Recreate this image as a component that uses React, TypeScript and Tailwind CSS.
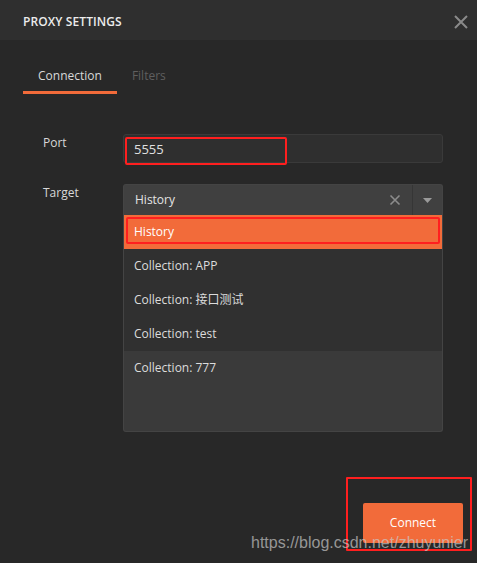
import React from 'react';

const OPTIONS = ['History', 'Collection: APP', 'Collection: 接口测试', 'Collection: test', 'Collection: 777'];

export default function App() {
  return (
    <div
      className="relative w-[477px] h-[563px] overflow-hidden bg-[#282828] text-[#dcdcdc]"
      style={{ fontFamily: '"Open Sans", "Noto Sans CJK SC", sans-serif' }}
    >
      {/* Header */}
      <div className="flex items-center justify-between h-10 pl-[23px] pr-[8px] pt-[3px] bg-[#2f2f2f]">
        <span className="text-[12px] font-semibold tracking-[0.1px] text-[#ececec]">PROXY SETTINGS</span>
        <svg width="16" height="16" viewBox="0 0 16 16">
          <path d="M2 2 L14 14 M14 2 L2 14" stroke="#8a8a8a" strokeWidth="2" />
        </svg>
      </div>

      {/* Tabs */}
      <div className="flex pl-[23px] mt-[28px]">
        <div className="px-[15px] pb-[7px] border-b-[3px] border-[#f26b3a] text-[12px] leading-4 text-[#d8d8d8]">
          Connection
        </div>
        <div className="px-[15px] pb-[7px] text-[12px] leading-4 text-[#5f5f5f]">Filters</div>
      </div>

      {/* Form */}
      <div className="flex flex-col mt-[40px] pl-[43px] pr-[34px]">
        <div className="flex">
          <div className="w-[80px] pt-[1px] text-[12px] leading-4 text-[#d8d8d8]">Port</div>
          <div className="flex-1 h-[29px] flex items-center pl-[10px] pt-[2px] rounded-[3px] border border-[#3a3a3a] bg-[#2f2f2f] text-[13px] text-[#e0e0e0]">
            5555
          </div>
        </div>

        <div className="flex mt-[21px]">
          <div className="w-[80px] pt-[1px] text-[12px] leading-4 text-[#d8d8d8]">Target</div>
          <div className="flex-1 flex flex-col">
            <div className="flex items-center h-[31px] rounded-t-[3px] bg-[#404040] border border-[#444] border-b-0">
              <span className="flex-1 pl-[11px] text-[12px] text-[#e4e4e4]">History</span>
              <svg width="12" height="12" viewBox="0 0 12 12" className="mr-[11px]">
                <path d="M1.5 1.5 L10.5 10.5 M10.5 1.5 L1.5 10.5" stroke="#8c8c8c" strokeWidth="1.6" />
              </svg>
              <div className="w-px h-full bg-[#363636]" />
              <div className="w-[29px] flex justify-center">
                <svg width="9" height="5" viewBox="0 0 9 5">
                  <path d="M0 0 L9 0 L4.5 5 Z" fill="#9a9a9a" />
                </svg>
              </div>
            </div>
            <div className="h-[217px] flex flex-col rounded-b-[3px] bg-[#3a3a3a] border border-[#444] border-t-0 overflow-hidden">
              {OPTIONS.map((o, i) => (
                <div
                  key={o}
                  className={
                    i === 0
                      ? 'h-[34px] flex items-center pl-[10px] text-[12px] bg-[#f26b3a] text-white'
                      : i === 4
                        ? 'h-[34px] flex items-center pl-[10px] text-[12px] bg-[#3a3a3a] text-[#dcdcdc]'
                        : 'h-[34px] flex items-center pl-[10px] text-[12px] bg-[#303030] text-[#dcdcdc]'
                  }
                >
                  {o}
                </div>
              ))}
            </div>
          </div>
        </div>
      </div>

      {/* Footer */}
      <div className="flex justify-end pr-[14px] mt-[71px]">
        <button className="w-[100px] h-[40px] rounded-[2px] bg-[#f26b3a] text-white text-[12px] font-medium">
          Connect
        </button>
      </div>

      {/* Annotation boxes */}
      <div className="absolute left-[125px] top-[137px] w-[162px] h-[28px] border-2 border-[#ff1f1f] rounded-[2px]" />
      <div className="absolute left-[126px] top-[217px] w-[314px] h-[27px] border-2 border-[#ff1f1f] rounded-[2px]" />
      <div className="absolute left-[346px] top-[477px] w-[126px] h-[74px] border-2 border-[#ff1f1f] rounded-[1px]" />

      {/* Watermark */}
      <div
        className="absolute left-[251px] top-[533px] text-[16px] leading-5 text-[#c8c8c8]/70"
        style={{ fontFamily: '"Liberation Sans", Arial, sans-serif' }}
      >
        https://blog.csdn.net/zhuyunier
      </div>
    </div>
  );
}
